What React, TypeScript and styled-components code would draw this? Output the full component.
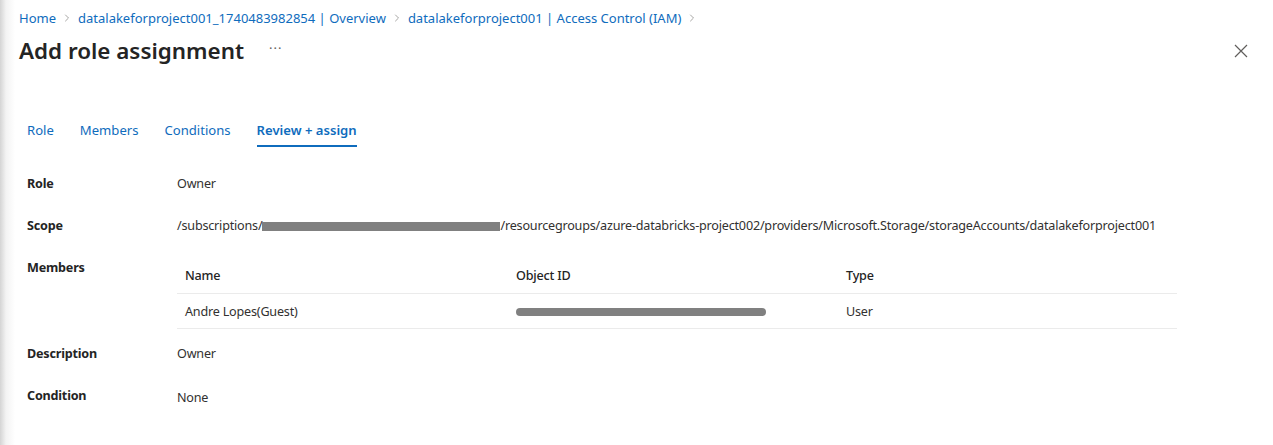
import React from 'react'
import styled, { createGlobalStyle } from 'styled-components'
import { ChevronRight } from 'lucide-react'

/**********************************************************************/

const GlobalStyle = createGlobalStyle`
  html, body {
    margin: 0;
    padding: 0;
    background: #fff;
  }
  body {
    font-family: "Noto Sans", "Open Sans", sans-serif;
    color: #323130;
    -webkit-font-smoothing: antialiased;
  }
`

const Blade = styled.div`
  min-height: 445px;
  background: linear-gradient(to right, #d4d4d4 0px, #f3f3f3 6px, #fff 15px);
`

const Header = styled.header`
  padding: 9px 19px 0 19px;
`

const Breadcrumb = styled.nav`
  display: flex;
  align-items: center;
  gap: 5px;
  font-size: 13px;
  line-height: 18px;
  color: #0f6cbd;

  svg {
    color: #8a8886;
  }
`

const Crumb = styled.a`
  color: inherit;
  text-decoration: none;
  white-space: nowrap;
`

const TitleRow = styled.div`
  display: flex;
  align-items: center;
  margin-top: 8px;
  height: 32px;
`

const Title = styled.h1`
  margin: 0;
  font-size: 22.4px;
  line-height: 32px;
  font-weight: 600;
  color: #242424;
`

const More = styled.span`
  margin-left: 25px;
  color: #605e5c;
  font-size: 13px;
  letter-spacing: 1px;
  line-height: 1;
  position: relative;
  top: -3px;
`

const Close = styled.button`
  margin-left: auto;
  margin-right: 6px;
  border: 0;
  background: none;
  padding: 0;
  display: flex;
  color: #605e5c;
`

const Body = styled.div`
  padding: 0 27px;
`

const Tabs = styled.div`
  display: flex;
  gap: 26px;
  margin-top: 53px;
`

const Tab = styled.div<{ $active?: boolean }>`
  font-size: 13.1px;
  line-height: 20px;
  padding-bottom: 5px;
  color: #0f6cbd;
  font-weight: ${(p) => (p.$active ? 600 : 400)};
  border-bottom: 2px solid ${(p) => (p.$active ? '#0f6cbd' : 'transparent')};
`

const Details = styled.div`
  margin-top: 16px;
  font-size: 12.6px;
  letter-spacing: -0.2px;
`

const Row = styled.div<{ $tight?: boolean }>`
  display: grid;
  grid-template-columns: 150px 1fr;
  padding: 11px 0 ${(p) => (p.$tight ? '4px' : '11px')};
  line-height: 20px;
`

const Label = styled.div`
  font-weight: 700;
  color: #242424;
`

const Value = styled.div<{ $shift?: number }>`
  color: #323130;
  white-space: nowrap;
  padding-top: ${(p) => p.$shift || 0}px;
`

const Redact = styled.span<{ $w: number; $round?: boolean }>`
  display: inline-block;
  width: ${(p) => p.$w}px;
  height: ${(p) => (p.$round ? 8 : 9)}px;
  border-radius: ${(p) => (p.$round ? 4 : 0)}px;
  background: #808080;
  vertical-align: middle;
`

const Table = styled.div`
  width: 1000px;
`

const TableRow = styled.div<{ $head?: boolean }>`
  display: grid;
  grid-template-columns: 331px 330px 1fr;
  border-bottom: 1px solid #ebebeb;
  padding: ${(p) => (p.$head ? '8px 0 7px' : '8px 0 6px')};
  color: ${(p) => (p.$head ? '#242424' : '#323130')};
  font-weight: ${(p) => (p.$head ? 500 : 400)};
`

const Cell = styled.div`
  padding: 0 8px;
  display: flex;
  align-items: center;
`

/**********************************************************************/

const App: React.FC = () => {
  const crumbs = [
    'Home',
    'datalakeforproject001_1740483982854 | Overview',
    'datalakeforproject001 | Access Control (IAM)',
  ]

  return (
    <Blade>
      <GlobalStyle />
      <Header>
        <Breadcrumb>
          {crumbs.map((c) => (
            <React.Fragment key={c}>
              <Crumb href="#">{c}</Crumb>
              <ChevronRight size={12} strokeWidth={1.5} />
            </React.Fragment>
          ))}
        </Breadcrumb>
        <TitleRow>
          <Title>Add role assignment</Title>
          <More>···</More>
          <Close aria-label="Close">
            <svg width="14" height="14" viewBox="0 0 14 14">
              <path d="M1 1 L13 13 M13 1 L1 13" stroke="currentColor" strokeWidth="1.2" />
            </svg>
          </Close>
        </TitleRow>
      </Header>

      <Body>
        <Tabs>
          <Tab>Role</Tab>
          <Tab>Members</Tab>
          <Tab>Conditions</Tab>
          <Tab $active>Review + assign</Tab>
        </Tabs>

        <Details>
          <Row>
            <Label>Role</Label>
            <Value>Owner</Value>
          </Row>
          <Row>
            <Label>Scope</Label>
            <Value>
              /subscriptions/
              <Redact $w={238} />
              /resourcegroups/azure-databricks-project002/providers/Microsoft.Storage/storageAccounts/datalakeforproject001
            </Value>
          </Row>
          <Row $tight>
            <Label>Members</Label>
            <Table>
              <TableRow $head>
                <Cell>Name</Cell>
                <Cell>Object ID</Cell>
                <Cell>Type</Cell>
              </TableRow>
              <TableRow>
                <Cell>Andre Lopes(Guest)</Cell>
                <Cell>
                  <Redact $w={250} $round />
                </Cell>
                <Cell>User</Cell>
              </TableRow>
            </Table>
          </Row>
          <Row>
            <Label>Description</Label>
            <Value>Owner</Value>
          </Row>
          <Row>
            <Label>Condition</Label>
            <Value $shift={2}>None</Value>
          </Row>
        </Details>
      </Body>
    </Blade>
  )
}

export default App
